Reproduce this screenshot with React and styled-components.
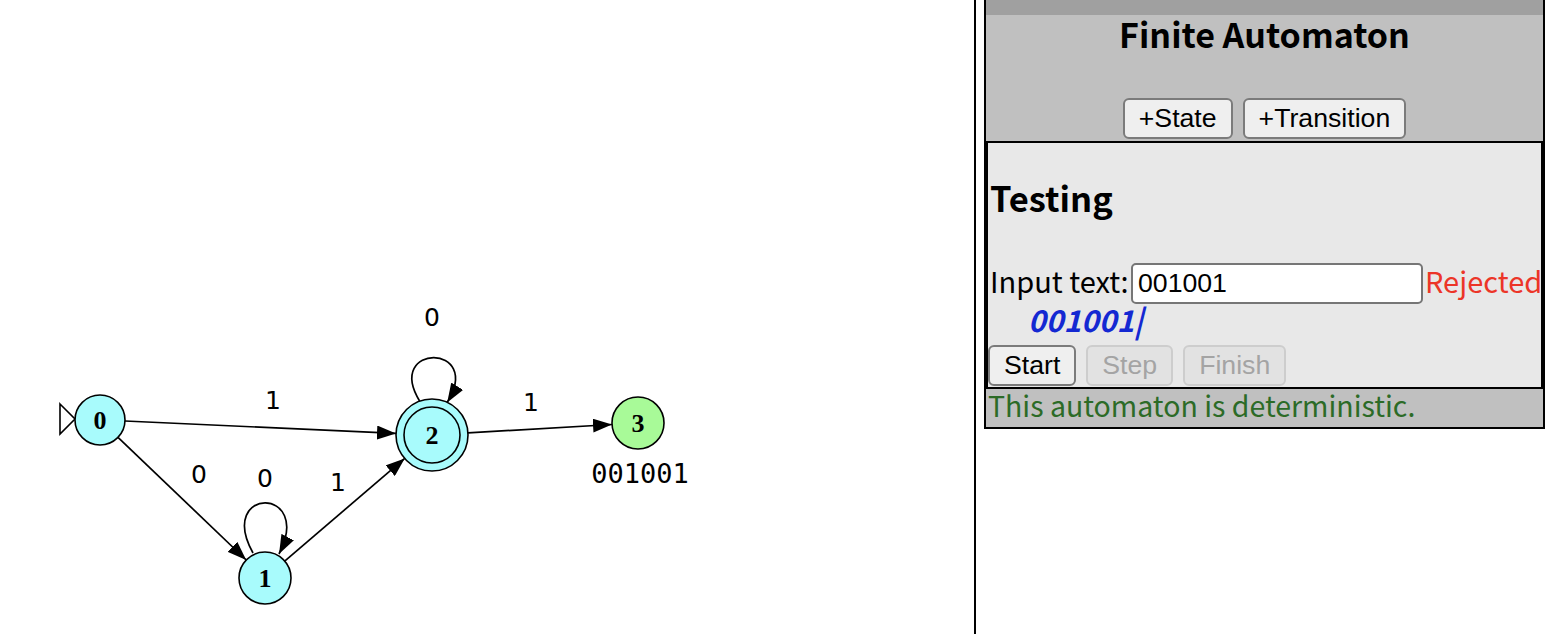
import React from "react";
import styled, { createGlobalStyle } from "styled-components";

const Global = createGlobalStyle`
  html, body { margin: 0; padding: 0; background: #fff; overflow: hidden; }
  body { font-family: "Noto Sans CJK KR", "Noto Sans", sans-serif; }
`;

const Page = styled.div`
  display: flex;
  align-items: flex-start;
  width: 1558px;
  height: 634px;
`;

const CanvasPane = styled.div`
  width: 974px;
  height: 634px;
  border-right: 2px solid #000;
  flex: none;
`;

const Panel = styled.aside`
  width: 561px;
  box-sizing: border-box;
  margin-left: 8px;
  border: 2px solid #000;
  border-top: none;
  background: #c0c0c0;
  display: flex;
  flex-direction: column;
  flex: none;
`;

const TopStrip = styled.div`
  height: 15px;
  background: #a0a0a0;
`;

const Title = styled.h3`
  margin: 0;
  padding-top: 1px;
  font-size: 34px;
  font-weight: 700;
  line-height: 36px;
  text-align: center;
  color: #000;
`;

const ToolBar = styled.div`
  display: flex;
  justify-content: ${(p) => (p.$start ? "flex-start" : "center")};
  gap: 10px;
  margin: ${(p) => p.$top || 0}px 0 ${(p) => p.$bottom || 0}px;
`;

const Btn = styled.button`
  font-family: "Liberation Sans", Arial, sans-serif;
  font-size: 26.67px;
  height: 41px;
  padding: 0 14px;
  box-sizing: border-box;
  background: #efefef;
  border: 2px solid #7b7b7b;
  border-radius: 6px;
  color: #000;
  &:disabled {
    color: #a4a4a4;
    border-color: #cdcdcd;
    background: #e2e2e2;
  }
`;

const TestingBox = styled.section`
  border: 2px solid #000;
  background: #e8e8e8;
  padding: 0 0 1px 0;
  display: flex;
  flex-direction: column;
`;

const SectionTitle = styled.h3`
  margin: 32px 0 0 2px;
  font-size: 34.5px;
  font-weight: 700;
  line-height: 44px;
  color: #000;
`;

const InputRow = styled.div`
  display: flex;
  align-items: center;
  height: 41px;
  margin-top: 44px;
  font-size: 29px;
  line-height: 33px;
  white-space: nowrap;
`;

const Label = styled.span`
  color: #000;
  padding: 0 0 7px 2px;
  flex: none;
  width: 141px;
`;

const TextInput = styled.input`
  flex: none;
  width: 292px;
  height: 41px;
  box-sizing: border-box;
  border: 2px solid #767676;
  border-radius: 5px;
  background: #fff;
  padding: 0 5px;
  font-family: "Liberation Sans", Arial, sans-serif;
  font-size: 26.67px;
  color: #000;
  margin: 0 2px 0 0;
`;

const Verdict = styled.span`
  flex: none;
  padding-bottom: 7px;
  color: ${(p) => (p.$ok ? "#2a7a2a" : "#ec3528")};
`;

const Trace = styled.div`
  margin-left: 40px;
  height: 38px;
  line-height: 30px;
  font-size: 30px;
  font-weight: 700;
  font-style: italic;
  color: #1428d2;
  white-space: nowrap;
`;

const Status = styled.div`
  height: 38px;
  line-height: 32px;
  font-size: 28.5px;
  color: #2c6b27;
  padding-left: 2px;
  white-space: nowrap;
`;

const CYAN = "#a8fbfc";
const GREEN = "#a8fa98";

const nodes = [
  { id: "0", x: 100, y: 420, r: 25, fill: CYAN },
  { id: "1", x: 265, y: 578, r: 26, fill: CYAN },
  { id: "2", x: 432, y: 435, r: 36, fill: CYAN, accept: true },
  { id: "3", x: 638, y: 423, r: 26, fill: GREEN },
];

const edges = [
  { d: "M125,421 L396,433.4" },
  { d: "M118,437.3 L246.2,560" },
  { d: "M284.7,561.1 L404.7,458.4" },
  { d: "M468,432.9 L612,424.5" },
  { d: "M253,553 C216,486 314,486 279,554" },
  { d: "M419.7,401.2 C384,343 484,343 447.2,402.4" },
];

const labels = [
  { t: "1", x: 273, y: 400 },
  { t: "0", x: 199, y: 474 },
  { t: "0", x: 265, y: 478 },
  { t: "1", x: 338, y: 482 },
  { t: "0", x: 432, y: 317 },
  { t: "1", x: 531, y: 402 },
];

function Diagram() {
  return (
    <svg width="974" height="634" viewBox="0 0 974 634">
      <defs>
        <marker
          id="arr"
          viewBox="0 0 19 14"
          refX="19"
          refY="7"
          markerWidth="19"
          markerHeight="14"
          markerUnits="userSpaceOnUse"
          orient="auto"
        >
          <path d="M0,0 L19,7 L0,14 Z" fill="#000" />
        </marker>
      </defs>
      {edges.map((e, i) => (
        <path key={i} d={e.d} fill="none" stroke="#000" strokeWidth="1.7" markerEnd="url(#arr)" />
      ))}
      <polygon points="60,404 75,419 60,434" fill="#fff" stroke="#000" strokeWidth="1.6" />
      {nodes.map((n) => (
        <g key={n.id}>
          <circle cx={n.x} cy={n.y} r={n.r} fill={n.fill} stroke="#000" strokeWidth="1.6" />
          {n.accept && <circle cx={n.x} cy={n.y} r={n.r - 8} fill="none" stroke="#000" strokeWidth="1.6" />}
          <text
            x={n.x}
            y={n.y + 9}
            textAnchor="middle"
            fontFamily="'Liberation Serif', serif"
            fontWeight="700"
            fontSize="26"
            fill="#000"
          >
            {n.id}
          </text>
        </g>
      ))}
      {labels.map((l, i) => (
        <text
          key={i}
          x={l.x}
          y={l.y + 9}
          textAnchor="middle"
          fontFamily="'DejaVu Sans', sans-serif"
          fontSize="25"
          fill="#000"
        >
          {l.t}
        </text>
      ))}
      <text
        x="640"
        y="483"
        textAnchor="middle"
        fontFamily="'DejaVu Sans Mono', monospace"
        fontSize="27"
        fill="#000"
      >
        001001
      </text>
    </svg>
  );
}

export default function App() {
  return (
    <>
      <Global />
      <Page>
        <CanvasPane>
          <Diagram />
        </CanvasPane>
        <Panel>
          <TopStrip />
          <Title>Finite Automaton</Title>
          <ToolBar $top={46} $bottom={2}>
            <Btn>+State</Btn>
            <Btn>+Transition</Btn>
          </ToolBar>
          <TestingBox>
            <SectionTitle>Testing</SectionTitle>
            <InputRow>
              <Label>Input text:</Label>
              <TextInput defaultValue="001001" />
              <Verdict>Rejected</Verdict>
            </InputRow>
            <Trace>001001|</Trace>
            <ToolBar $start $top={3}>
              <Btn>Start</Btn>
              <Btn disabled>Step</Btn>
              <Btn disabled>Finish</Btn>
            </ToolBar>
          </TestingBox>
          <Status>This automaton is deterministic.</Status>
        </Panel>
      </Page>
    </>
  );
}
